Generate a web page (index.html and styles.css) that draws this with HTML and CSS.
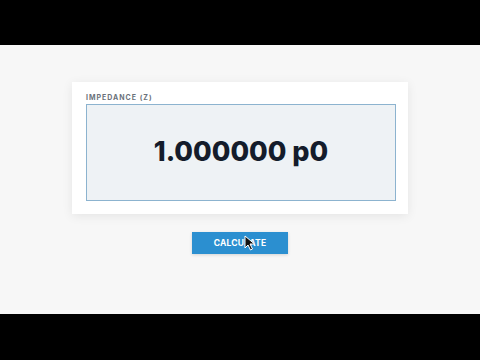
FILE: index.html
```html
<!DOCTYPE html>
<html lang="en">
<head>
  <meta charset="UTF-8">
  <title>Impedance</title>
  <link rel="stylesheet" href="styles.css">
</head>
<body>

<div class="bar"></div>

<div class="stage">
  <div class="card">
    <div class="label">IMPEDANCE (Z)</div>
    <div class="output">1.000000 p0</div>
  </div>

  <div class="action">
    <button class="calc">CALCULATE</button>
    <svg class="cursor" width="12" height="16" viewBox="0 0 12 16">
      <path d="M1 1 L1 13 L4 10 L6.5 15 L8.5 14 L6 9 L10.5 9 Z" fill="#111" stroke="#fff" stroke-width="1"/>
    </svg>
  </div>
</div>

<div class="bar bottom"></div>

</body>
</html>
```

FILE: styles.css
```css
body {
  margin: 0;
  background: #000;
  font-family: 'Inter', 'Liberation Sans', sans-serif;
}
.bar {
  height: 45px;
  background: #000;
}
.bar.bottom {
  height: 46px;
}
.stage {
  height: 269px;
  background: #f7f7f7;
  display: flex;
  flex-direction: column;
  align-items: center;
  padding-top: 37px;
  box-sizing: border-box;
}
.card {
  width: 336px;
  box-sizing: border-box;
  background: #fff;
  padding: 12px 12px 13px 14px;
  box-shadow: 0 2px 10px rgba(0,0,0,0.08);
}
.label {
  font-size: 7px;
  font-weight: 700;
  letter-spacing: 1px;
  color: #6a717a;
  line-height: 8px;
  margin-bottom: 2px;
}
.output {
  height: 95px;
  background: #eef2f5;
  border: 1px solid #8cb3cf;
  display: flex;
  align-items: center;
  justify-content: center;
  font-size: 27px;
  font-weight: 800;
  color: #141c2b;
  padding-bottom: 2px;
  box-sizing: border-box;
  height: 97px;
}
.action {
  position: relative;
  margin-top: 16px;
}
.calc {
  width: 96px;
  height: 22px;
  border: none;
  background: #2b8fd0;
  color: #fff;
  font-family: 'Inter', 'Liberation Sans', sans-serif;
  font-size: 8.5px;
  font-weight: 700;
  letter-spacing: 0.2px;
  box-shadow: 0 1px 3px rgba(0,0,0,0.15);
  padding: 0;
}
.cursor {
  position: absolute;
  left: 52px;
  top: 5px;
}
```
